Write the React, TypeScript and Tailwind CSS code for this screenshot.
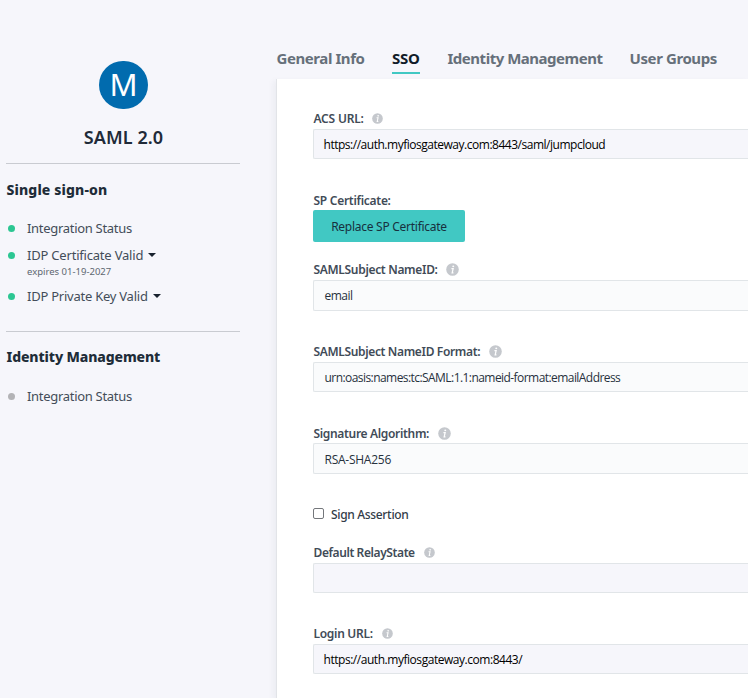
import type { ReactNode } from "react";

function InfoIcon({ size }: { size: number }) {
  return (
    <svg width={size} height={size} viewBox="0 0 12 12" className="shrink-0">
      <circle cx="6" cy="6" r="5.8" fill="#c5c8cd" />
      <circle cx="6.7" cy="3.1" r="0.9" fill="#fff" />
      <path d="M5 5.2h1.6L5.7 9.2h1.2" fill="none" stroke="#fff" strokeWidth="1.15" />
    </svg>
  );
}

function Label({ children, className = "", icon = 0, iconClass = "" }: { children: ReactNode; className?: string; icon?: number; iconClass?: string }) {
  return (
    <div className="flex h-5 items-center whitespace-nowrap text-[12px] font-semibold text-[#414b57]">
      <span className={"ml-[0.5px] mr-[0.5px] pt-[2px] " + className}>{children}</span>
      {icon > 0 && (
        <span className={iconClass}>
          <InfoIcon size={icon} />
        </span>
      )}
    </div>
  );
}

function Field({ value = "", boxClass, textClass = "" }: { value?: string; boxClass: string; textClass?: string }) {
  return (
    <div className={"flex items-center whitespace-nowrap rounded-l-[2px] border border-r-0 border-[#e1e5e8] font-['Open_Sans','Noto_Sans',sans-serif] text-[12px] " + boxClass}>
      <span className={"pl-[0.5px] pt-px leading-4 " + textClass}>{value}</span>
    </div>
  );
}

function Status({ children, className = "", dot = "bg-[#2cc692]", caret = false }: { children: ReactNode; className?: string; dot?: string; caret?: boolean }) {
  return (
    <div className="flex h-5 items-center whitespace-nowrap text-[13px] text-[#434d59]">
      <span className={"ml-[2px] mr-[12px] size-[7px] shrink-0 rounded-full " + dot} />
      <span className={"pt-[2px] " + className}>{children}</span>
      {caret && (
        <svg width="8" height="4" viewBox="0 0 8 4" className="ml-[5px]">
          <path d="M0 0h8L4 4z" fill="#18222e" />
        </svg>
      )}
    </div>
  );
}

export default function App() {
  return (
    <div className="flex h-[698px] w-[748px] overflow-hidden bg-[#f6f6fb] font-['Noto_Sans','Open_Sans',sans-serif]">
      <aside className="flex w-[276px] shrink-0 flex-col pl-[6px] pr-9 pt-[61px]">
        <div className="ml-[93px] flex h-12 w-[49px] items-center justify-center rounded-full bg-[#016bae] text-[31px] font-normal leading-none text-white">
          <span className="pb-px">M</span>
        </div>
        <div className="mt-4 flex h-6 items-center justify-center text-[18px] font-semibold tracking-[0.08px] text-[#202a38]">
          <span className="pl-px pt-px">SAML 2.0</span>
        </div>
        <div className="mt-[14px] h-px bg-[#c9cbd1]" />
        <h2 className="mt-4 flex h-5 items-center whitespace-nowrap text-[14px] font-extrabold text-[#202c38]">
          <span className="pb-px pl-[0.5px] tracking-[0.13px]">Single sign-on</span>
        </h2>
        <div className="mt-[18px]">
          <Status className="tracking-[-0.3px]">Integration Status</Status>
        </div>
        <div className="mt-[7px]">
          <Status caret className="tracking-[-0.2px]">IDP Certificate Valid</Status>
        </div>
        <div className="mt-px ml-[21px] flex h-3 items-center whitespace-nowrap text-[9.5px] text-[#5d6670]">
          <span>expires 01-19-2027</span>
        </div>
        <div className="mt-2">
          <Status caret className="tracking-[-0.24px]">IDP Private Key Valid</Status>
        </div>
        <div className="mt-[25px] h-px bg-[#c9cbd1]" />
        <h2 className="mt-[15px] flex h-5 items-center whitespace-nowrap text-[14px] font-extrabold text-[#202c38]">
          <span className="pb-px pl-[0.5px] tracking-[-0.12px]">Identity Management</span>
        </h2>
        <div className="mt-[19px]">
          <Status dot="bg-[#b3b3b6]" className="tracking-[-0.3px]">Integration Status</Status>
        </div>
      </aside>
      <main className="flex w-[472px] flex-col">
        <nav className="flex h-[79px] shrink-0 items-start whitespace-nowrap pt-[46px] text-[15px] font-bold leading-6 text-[#66707a]">
          <span className="w-[116px] pl-[0.5px] tracking-[-0.42px]">General Info</span>
          <span className="h-7 w-7 border-b-2 border-[#41c8c3] tracking-[-0.3px] text-[#111c29]">SSO</span>
          <span className="ml-[27px] w-[182px] pl-[0.5px] tracking-[-0.48px]">Identity Management</span>
          <span className="pl-[0.5px] tracking-[-0.4px]">User Groups</span>
        </nav>
        <section className="flex-1 border-l border-[#e2e4e8] bg-white pl-9 pt-[29px] shadow-[-3px_2px_6px_rgba(40,50,70,0.05)]">
          <Label icon={11} className="tracking-[-0.2px]" iconClass="ml-2">ACS URL:</Label>
          <Field boxClass="mt-px h-[30px] bg-[#f6f6fb] pl-[9px] text-black" textClass="tracking-[-0.48px]" value="https://auth.myfiosgateway.com:8443/saml/jumpcloud" />
          <div className="mt-[31px]">
            <Label className="tracking-[-0.28px]">SP Certificate:</Label>
          </div>
          <div className="flex h-8 w-[152px] items-center justify-center whitespace-nowrap rounded-[2px] bg-[#41c8c3] text-[12px] text-[#17303e]">
            <span className="pt-[2px] tracking-[-0.27px]">Replace SP Certificate</span>
          </div>
          <div className="mt-[17px]">
            <Label icon={13} className="tracking-[-0.32px]" iconClass="ml-2">SAMLSubject NameID:</Label>
          </div>
          <Field boxClass="mt-px h-[31px] bg-[#fafbfc] pl-[10px] text-[#27313d]" textClass="tracking-[-0.5px]" value="email" />
          <div className="mt-[30px]">
            <Label icon={13} className="tracking-[-0.35px]" iconClass="ml-2">SAMLSubject NameID Format:</Label>
          </div>
          <Field boxClass="mt-px h-[30px] bg-[#fafbfc] pl-[10px] text-[#27313d]" textClass="tracking-[-0.56px]" value="urn:oasis:names:tc:SAML:1.1:nameid-format:emailAddress" />
          <div className="mt-[31px]">
            <Label icon={13} className="tracking-[-0.33px]" iconClass="ml-2">Signature Algorithm:</Label>
          </div>
          <Field boxClass="h-[31px] bg-[#fafbfc] pl-[10px] text-[#27313d]" textClass="mt-px tracking-[-0.25px]" value="RSA-SHA256" />
          <div className="mt-[30px] flex h-5 items-center whitespace-nowrap text-[12px] font-medium text-[#323c48]">
            <span className="mb-[2px] mr-[7px] size-[11px] rounded-[2px] border border-[#74777b] bg-white" />
            <span className="pt-[2px] tracking-[-0.33px]">Sign Assertion</span>
          </div>
          <div className="mt-[18px]">
            <Label icon={11} className="tracking-[-0.4px]" iconClass="ml-[8.5px]">Default RelayState</Label>
          </div>
          <Field boxClass="mt-px h-[30px] bg-[#f6f6fb]" />
          <div className="mt-[30px]">
            <Label icon={11} className="tracking-[-0.3px]" iconClass="ml-[8.5px]">Login URL:</Label>
          </div>
          <Field boxClass="mt-px h-[30px] bg-[#f6f6fb] pl-[9px] text-black" textClass="tracking-[-0.46px]" value="https://auth.myfiosgateway.com:8443/" />
        </section>
      </main>
    </div>
  );
}
